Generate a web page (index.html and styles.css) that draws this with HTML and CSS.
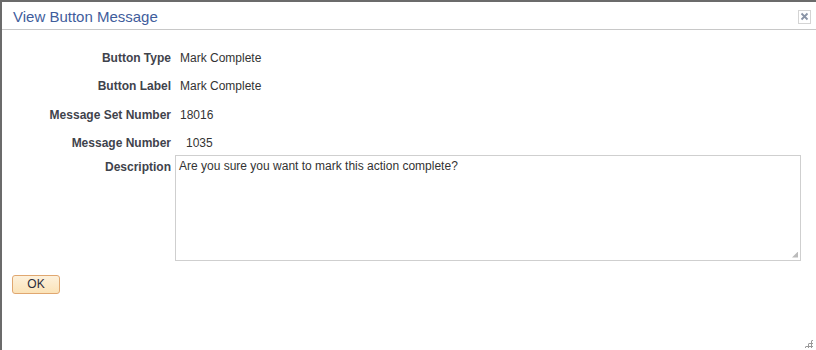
FILE: index.html
```html
<!DOCTYPE html>
<html>
<head>
<meta charset="utf-8">
<link rel="stylesheet" href="styles.css">
</head>
<body>
<div class="dialog">
  <div class="header">
    <span class="title">View Button Message</span>
    <span class="close"><svg width="9" height="9" viewBox="0 0 9 9"><path d="M1.5 1.5 L7.5 7.5 M7.5 1.5 L1.5 7.5" stroke="#8a94a6" stroke-width="1.8"/></svg></span>
  </div>
  <div class="form">
    <div class="label">Button Type</div><div class="value">Mark Complete</div>
    <div class="label">Button Label</div><div class="value">Mark Complete</div>
    <div class="label">Message Set Number</div><div class="value">18016</div>
    <div class="label">Message Number</div><div class="value indent">1035</div>
    <div class="label desc">Description</div>
    <div class="textbox">Are you sure you want to mark this action complete?<span class="grip"></span></div>
  </div>
  <div class="actions"><button class="ok">OK</button></div>
  <span class="grip main"></span>
</div>
</body>
</html>
```
FILE: styles.css
```css
html, body { margin: 0; padding: 0; background: #fff; }
body { font-family: "Liberation Sans", Arial, sans-serif; font-size: 12px; color: #333; }
.dialog {
  position: relative;
  width: 814px;
  height: 348px;
  border-top: 2px solid #6b6b6b;
  border-left: 2px solid #6b6b6b;
}
.header {
  height: 27px;
  border-bottom: 1px solid #c8c8c8;
  display: flex;
  align-items: center;
  justify-content: space-between;
  padding: 0 5px 0 11px;
}
.title { font-size: 15px; color: #3f5d9c; position: relative; top: 1px; }
.close {
  width: 11px; height: 12px;
  border: 1px solid #d4d4d4;
  display: flex; align-items: center; justify-content: center;
  position: relative; top: 1px;
}
.form {
  display: grid;
  grid-template-columns: 169px 1fr;
  grid-template-rows: 28.5px 28.5px 28.5px 28.5px 106px;
  padding-top: 13.5px;
}
.label {
  font-weight: bold;
  text-align: right;
  color: #3f434c;
  display: flex; align-items: center; justify-content: flex-end;
}
.value { padding-left: 9px; display: flex; align-items: center; color: #333; }
.value.indent { padding-left: 15px; }
.label.desc { align-items: flex-start; padding-top: 2px; grid-row: 5; }
.textbox {
  position: relative;
  grid-row: 5;
  margin-left: 4px;
  width: 618px;
  height: 98px;
  border: 1px solid #cfcfcf;
  padding: 3px 3px;
  margin-top: -3px;
  color: #333;
  line-height: 14px;
}
.actions { padding: 11px 0 0 10px; }
.ok {
  width: 48px; height: 19px;
  font-family: "Liberation Sans", Arial, sans-serif;
  font-size: 12px;
  color: #2b2b3a;
  background: linear-gradient(#fdf1dc, #fbe3b8);
  border: 1px solid #e0a770;
  border-radius: 3px;
  padding: 0;
}
.grip {
  position: absolute;
  right: 2px; bottom: 2px;
  width: 6px; height: 6px;
  background:
    radial-gradient(circle, #bbb 0.8px, transparent 1px) 0 0 / 2px 2px;
  clip-path: polygon(100% 0, 100% 100%, 0 100%);
}
.grip.main {
  right: 3px; bottom: 2px;
  width: 9px; height: 9px;
  background: radial-gradient(circle, #999 1px, transparent 1.2px) 0 0 / 3px 3px;
}
```
